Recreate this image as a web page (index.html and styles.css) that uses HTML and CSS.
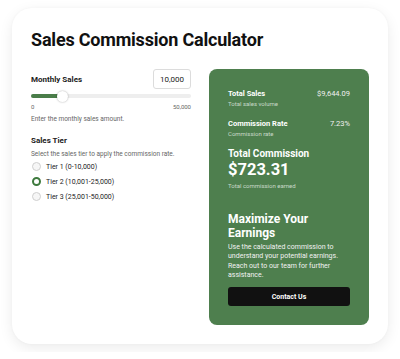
FILE: index.html
```html
<!DOCTYPE html>
<html>
<head>
<meta charset="utf-8">
<link rel="stylesheet" href="styles.css">
</head>
<body>
<div class="card">
  <h1 class="title">Sales Commission Calculator</h1>
  <div class="cols">
    <div class="left">
      <div class="field-head">
        <span class="label">Monthly Sales</span>
        <div class="input">10,000</div>
      </div>
      <div class="slider">
        <div class="track"><div class="fill" style="width:19.5%"></div></div>
        <div class="thumb" style="left:19.5%"></div>
      </div>
      <div class="range"><span>0</span><span>50,000</span></div>
      <p class="hint">Enter the monthly sales amount.</p>

      <div class="label tier-label">Sales Tier</div>
      <p class="hint">Select the sales tier to apply the commission rate.</p>
      <div class="radios">
        <div class="radio"><span class="dot"></span>Tier 1 (0-10,000)</div>
        <div class="radio"><span class="dot on"></span>Tier 2 (10,001-25,000)</div>
        <div class="radio"><span class="dot"></span>Tier 3 (25,001-50,000)</div>
      </div>
    </div>
    <div class="panel">
      <div class="stat">
        <div class="stat-row"><span class="stat-name">Total Sales</span><span class="stat-val">$9,644.09</span></div>
        <div class="stat-sub">Total sales volume</div>
      </div>
      <div class="stat stat-rate">
        <div class="stat-row"><span class="stat-name">Commission Rate</span><span class="stat-val">7.23%</span></div>
        <div class="stat-sub">Commission rate</div>
      </div>
      <div class="total">
        <div class="total-name">Total Commission</div>
        <div class="total-val">$723.31</div>
        <div class="stat-sub">Total commission earned</div>
      </div>
      <h2 class="cta-title">Maximize Your Earnings</h2>
      <p class="cta-text">Use the calculated commission to understand your potential earnings. Reach out to our team for further assistance.</p>
      <div class="btn">Contact Us</div>
    </div>
  </div>
</div>
</body>
</html>
```
FILE: styles.css
```css
* { box-sizing: border-box; }
body {
  margin: 0;
  background: #ffffff;
  font-family: Roboto, "Noto Sans", sans-serif;
  color: #111;
}
.card {
  margin: 8px 12px;
  width: 376px;
  height: 336px;
  background: #fff;
  border-radius: 20px;
  box-shadow: 0 4px 14px rgba(0,0,0,0.08), 0 0 3px rgba(0,0,0,0.03);
  padding: 21px 19px 0 19px;
}
.title {
  margin: 0;
  font-size: 18px;
  font-weight: 700;
  line-height: 22px;
  letter-spacing: -0.2px;
  color: #111;
}
.cols {
  display: flex;
  gap: 18px;
  margin-top: 18px;
}
.left {
  width: 160px;
}
.field-head {
  display: flex;
  justify-content: space-between;
  align-items: center;
}
.label {
  font-size: 8px;
  font-weight: 700;
  color: #222;
}
.input {
  width: 38px;
  height: 20px;
  border: 1px solid #dcdcdc;
  border-radius: 3px;
  font-size: 8px;
  display: flex;
  align-items: center;
  justify-content: center;
  color: #222;
}
.slider {
  position: relative;
  height: 10px;
  margin-top: 2px;
}
.track {
  position: absolute;
  left: 0; right: 0; top: 3px;
  height: 4px;
  border-radius: 2px;
  background: #eeeeee;
}
.fill {
  height: 100%;
  background: #4a7d49;
  border-radius: 2px;
}
.thumb {
  position: absolute;
  top: 0;
  width: 11px;
  height: 11px;
  margin-left: -5px;
  border-radius: 50%;
  background: #fff;
  box-shadow: 0 0 2px rgba(0,0,0,0.35);
}
.range {
  display: flex;
  justify-content: space-between;
  font-size: 6px;
  line-height: 8px;
  color: #666;
  margin-top: 2px;
}
.hint {
  margin: 4px 0 0 0;
  font-size: 6.5px;
  line-height: 9px;
  color: #666;
}
.tier-label {
  margin-top: 12px;
}
.tier-label + .hint { margin-top: 5px; }
.radios {
  margin-top: 2px;
  display: flex;
  flex-direction: column;
  gap: 4px;
}
.radio {
  display: flex;
  align-items: center;
  gap: 5px;
  font-size: 7px;
  color: #222;
  height: 11px;
}
.dot {
  width: 9px;
  height: 9px;
  border-radius: 50%;
  border: 1px solid #cfcfcf;
  background: #f6f6f6;
  margin-left: 1px;
}
.dot.on {
  border: 2.5px solid #3e7a3e;
  background: #fff;
}
.panel {
  width: 160px;
  height: 256px;
  background: #4e7f4e;
  border-radius: 8px;
  padding: 20px 19px 0 19px;
  color: #fff;
}
.stat { margin-bottom: 11px; }
.stat-rate { margin-bottom: 9px; }
.stat-row {
  display: flex;
  justify-content: space-between;
  font-size: 7.5px;
  line-height: 10px;
}
.stat-name { font-weight: 700; }
.stat-val { color: #f0f0f0; }
.stat-sub {
  font-size: 6px;
  line-height: 8px;
  color: rgba(255,255,255,0.7);
  margin-top: 1px;
}
.total-name {
  font-size: 10px;
  font-weight: 700;
  line-height: 13px;
}
.total-val {
  font-size: 16.5px;
  font-weight: 700;
  line-height: 20px;
}
.total .stat-sub { margin-top: 2px; }
.cta-title {
  margin: 22px 0 0 0;
  font-size: 12px;
  font-weight: 700;
  line-height: 14px;
}
.cta-text {
  margin: 3px 0 0 0;
  font-size: 7px;
  line-height: 9.3px;
  color: #f2f2f2;
}
.btn {
  margin-top: 7px;
  height: 19px;
  background: #111;
  border-radius: 3px;
  color: #fff;
  font-size: 7px;
  font-weight: 700;
  display: flex;
  align-items: center;
  justify-content: center;
}
```
